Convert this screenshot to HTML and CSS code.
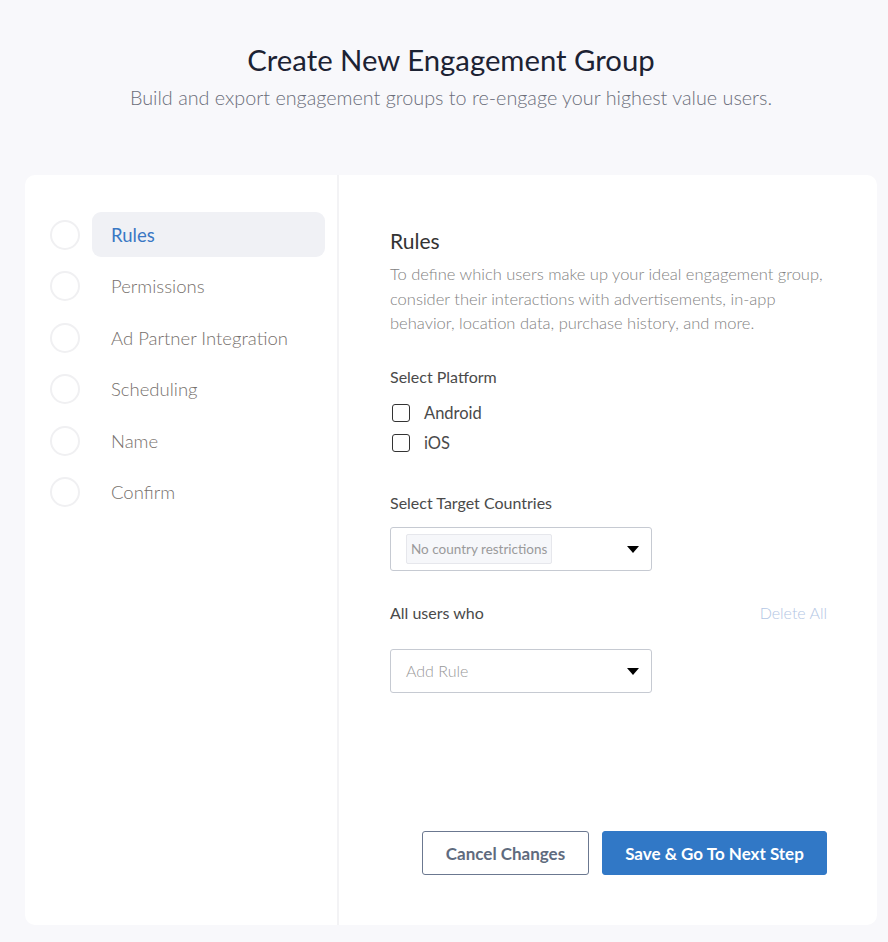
FILE: index.html
```html
<!DOCTYPE html>
<html lang="en">
<head>
<meta charset="utf-8">
<title>Create New Engagement Group</title>
<link rel="stylesheet" href="styles.css">
</head>
<body>
  <header class="page-header">
    <h1 class="title">Create New Engagement Group</h1>
    <p class="subtitle">Build and export engagement groups to re-engage your highest value users.</p>
  </header>

  <main class="card">
    <nav class="steps">
      <div class="step">
        <span class="step-circle"></span>
        <span class="step-label active">Rules</span>
      </div>
      <div class="step">
        <span class="step-circle"></span>
        <span class="step-label">Permissions</span>
      </div>
      <div class="step">
        <span class="step-circle"></span>
        <span class="step-label">Ad Partner Integration</span>
      </div>
      <div class="step">
        <span class="step-circle"></span>
        <span class="step-label">Scheduling</span>
      </div>
      <div class="step">
        <span class="step-circle"></span>
        <span class="step-label">Name</span>
      </div>
      <div class="step">
        <span class="step-circle"></span>
        <span class="step-label">Confirm</span>
      </div>
    </nav>

    <section class="content">
      <h2 class="section-title">Rules</h2>
      <p class="section-desc">To define which users make up your ideal engagement group, consider their interactions with advertisements, in-app behavior, location data, purchase history, and more.</p>

      <div class="field-label platform-label">Select Platform</div>
      <div class="checks">
        <label class="check-row"><span class="checkbox"></span><span class="check-text">Android</span></label>
        <label class="check-row"><span class="checkbox"></span><span class="check-text">iOS</span></label>
      </div>

      <div class="field-label countries-label">Select Target Countries</div>
      <div class="select countries-select">
        <span class="tag">No country restrictions</span>
        <span class="caret"></span>
      </div>

      <div class="users-row">
        <span class="field-label">All users who</span>
        <span class="delete-all">Delete All</span>
      </div>
      <div class="select rule-select">
        <span class="placeholder">Add Rule</span>
        <span class="caret"></span>
      </div>

      <div class="actions">
        <button class="btn btn-secondary">Cancel Changes</button>
        <button class="btn btn-primary">Save &amp; Go To Next Step</button>
      </div>
    </section>
  </main>
</body>
</html>
```

FILE: styles.css
```css
* {
  box-sizing: border-box;
}

html, body {
  margin: 0;
  padding: 0;
}

body {
  background: #f8f8fb;
  font-family: "Lato", "Open Sans", "Liberation Sans", sans-serif;
  color: #333;
}

.page-header {
  text-align: center;
  margin-left: 25px;
  width: 852px;
  padding-top: 41px;
  height: 175px;
}

.title {
  margin: 0;
  font-size: 29.3px;
  line-height: 38px;
  font-weight: 400;
  color: #1c2233;
}

.subtitle {
  margin: 0;
  margin-top: 5px;
  font-size: 19.8px;
  line-height: 26px;
  font-weight: 300;
  color: #6b6e7a;
}

.card {
  margin-left: 25px;
  width: 852px;
  height: 750px;
  background: #ffffff;
  border-radius: 10px;
  display: flex;
}

.steps {
  width: 314px;
  border-right: 2px solid #f3f3f5;
  padding-top: 37px;
  padding-left: 25px;
  display: flex;
  flex-direction: column;
  gap: 6.5px;
}

.step {
  display: flex;
  align-items: center;
  gap: 12px;
}

.step-circle {
  width: 30px;
  height: 30px;
  border-radius: 50%;
  border: 2px solid #f0f0f2;
  flex: none;
}

.step-label {
  width: 233px;
  height: 45px;
  display: flex;
  align-items: center;
  padding-left: 19px;
  border-radius: 9px;
  font-size: 18.5px;
  font-weight: 300;
  color: #76706c;
}

.step-label.active {
  background: #f0f1f5;
  color: #3a78c4;
  font-weight: 400;
}

.content {
  flex: 1;
  padding: 52px 50px 50px 51px;
  display: flex;
  flex-direction: column;
}

.section-title {
  margin: 0;
  font-size: 21px;
  line-height: 28px;
  font-weight: 400;
  color: #333;
}

.section-desc {
  margin: 7px 0 0;
  font-size: 16.5px;
  line-height: 24.5px;
  font-weight: 300;
  color: #828282;
}

.field-label {
  font-size: 16px;
  line-height: 22px;
  color: #4a4a4a;
}

.platform-label {
  margin-top: 30px;
}

.checks {
  margin-top: 10px;
  display: flex;
  flex-direction: column;
}

.check-row {
  height: 30px;
  display: flex;
  align-items: center;
  gap: 14px;
  padding-left: 2px;
}

.checkbox {
  width: 18px;
  height: 18px;
  border: 1.5px solid #333;
  border-radius: 3px;
  flex: none;
}

.check-text {
  font-size: 16.5px;
  color: #4a4a4a;
}

.countries-label {
  margin-top: 34px;
}

.select {
  position: relative;
  width: 262px;
  height: 44px;
  border: 1px solid #c6cad2;
  border-radius: 3px;
  display: flex;
  align-items: center;
  padding-left: 15px;
}

.countries-select {
  margin-top: 13px;
}

.tag {
  height: 30px;
  display: flex;
  align-items: center;
  padding: 0 4px;
  background: #f6f7fa;
  border: 1px solid #e6e7ec;
  border-radius: 2px;
  font-size: 13.5px;
  color: #9a9a9a;
}

.caret {
  position: absolute;
  right: 12px;
  top: 18px;
  width: 0;
  height: 0;
  border-left: 6px solid transparent;
  border-right: 6px solid transparent;
  border-top: 7px solid #000;
}

.users-row {
  margin-top: 31px;
  display: flex;
  justify-content: space-between;
  align-items: center;
}

.delete-all {
  font-size: 16px;
  font-weight: 300;
  color: #b3c6e4;
}

.rule-select {
  margin-top: 25px;
}

.placeholder {
  font-size: 16px;
  font-weight: 300;
  color: #999;
}

.actions {
  margin-top: auto;
  display: flex;
  justify-content: flex-end;
  gap: 13px;
}

.btn {
  height: 44px;
  border-radius: 3px;
  font-family: inherit;
  font-size: 17px;
  font-weight: 700;
  cursor: pointer;
}

.btn-secondary {
  width: 167px;
  background: #fff;
  border: 1px solid #6b7890;
  color: #5f6b7e;
}

.btn-primary {
  width: 225px;
  background: #3178c6;
  border: 1px solid #3178c6;
  color: #fff;
}
```
